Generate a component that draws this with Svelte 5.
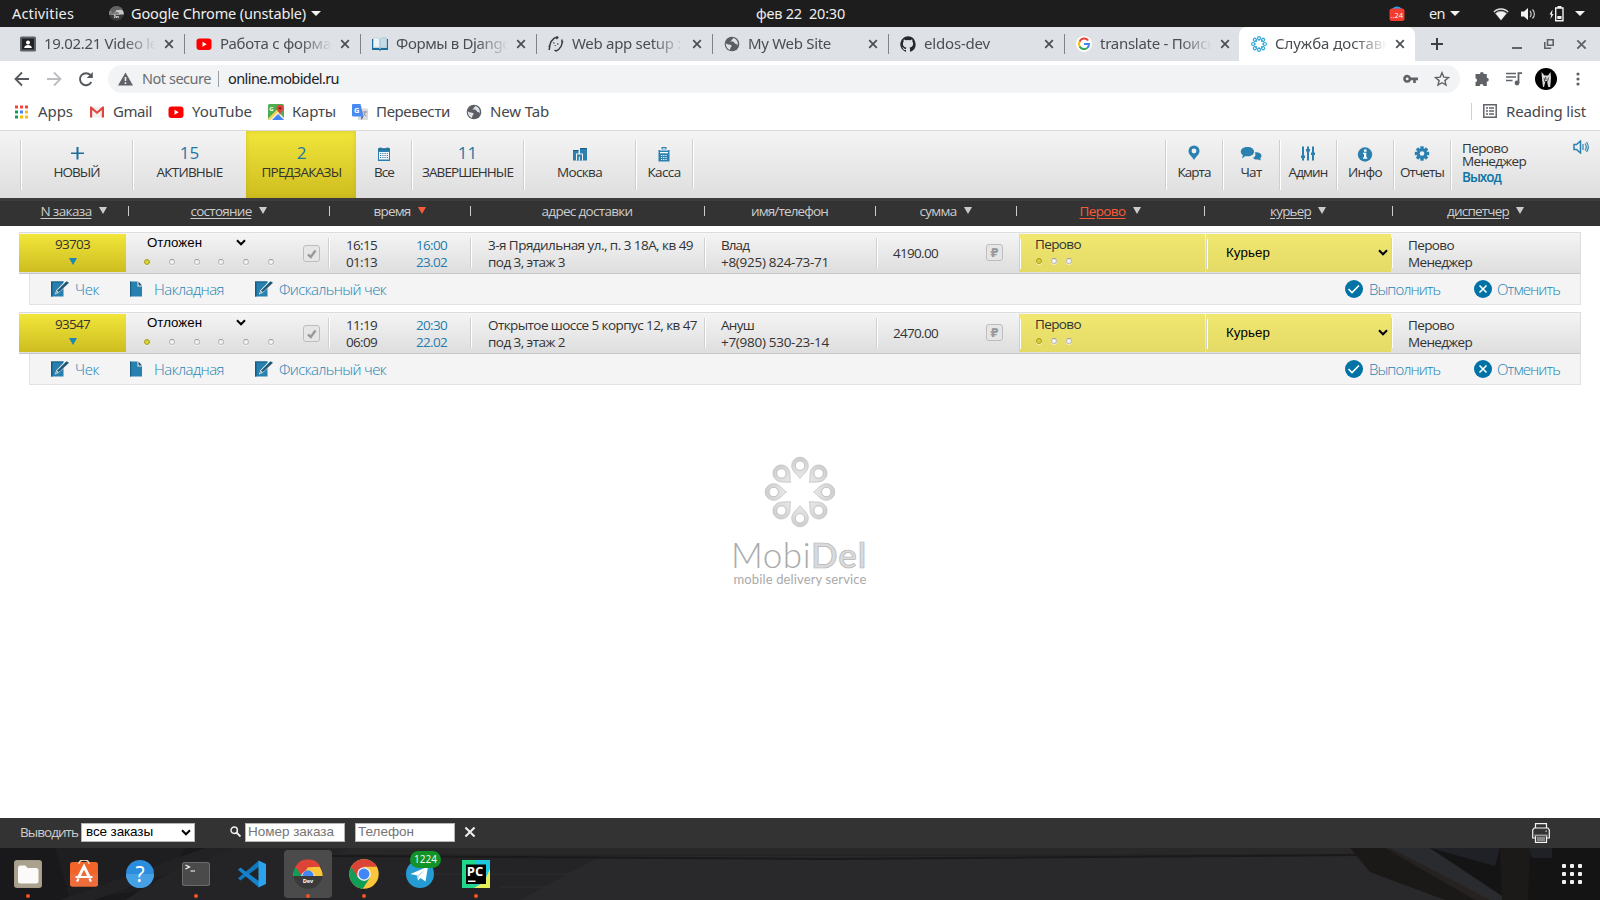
<script>
  // Spreads the letters of a label so that it fills exactly `width` pixels.
  function fit(node, width) {
    if (!width) return;
    const natural = node.getBoundingClientRect().width;
    node.style.letterSpacing = (width - natural) / node.textContent.length + 'px';
  }

  const tabs = [
    { icon: 'person', title: '19.02.21 Video le', w: 114 },
    { icon: 'youtube', title: 'Работа с форма', w: 111 },
    { icon: 'book', title: 'Формы в Django', w: 115 },
    { icon: 'horse', title: 'Web app setup :', w: 109 },
    { icon: 'globe', title: 'My Web Site', w: 83 },
    { icon: 'github', title: 'eldos-dev', w: 66 },
    { icon: 'google', title: 'translate - Поиск', w: 115 },
    { icon: 'flower', title: 'Служба доставк', w: 115, active: true }
  ];

  const bookmarks = [
    { icon: 'apps', title: 'Apps', w: 35, gap: 0 },
    { icon: 'gmail', title: 'Gmail', w: 39, gap: 16 },
    { icon: 'youtube', title: 'YouTube', w: 60, gap: 16 },
    { icon: 'maps', title: 'Карты', w: 44, gap: 16 },
    { icon: 'translate', title: 'Перевести', w: 74, gap: 16 },
    { icon: 'globe', title: 'New Tab', w: 59, gap: 16 }
  ];

  const menu = [
    { icon: 'plus', title: 'НОВЫЙ', size: 112, w: 46 },
    { count: 15, title: 'АКТИВНЫЕ', size: 114, w: 66 },
    { count: 2, title: 'ПРЕДЗАКАЗЫ', size: 110, w: 80, active: true },
    { icon: 'calendar', title: 'Все', size: 55, w: 20, bare: true },
    { count: 11, title: 'ЗАВЕРШЕННЫЕ', size: 112, w: 91 },
    { icon: 'city', title: 'Москва', size: 112, w: 45 },
    { icon: 'cash', title: 'Касса', size: 57, w: 33 }
  ];

  const tools = [
    { icon: 'pin', title: 'Карта', w: 33 },
    { icon: 'chat', title: 'Чат', w: 21 },
    { icon: 'sliders', title: 'Админ', w: 39 },
    { icon: 'info', title: 'Инфо', w: 34 },
    { icon: 'gear', title: 'Отчеты', w: 44 }
  ];

  const columns = [
    { title: 'N заказа', w: 51, link: true, arrow: true },
    { title: 'состояние', w: 61, link: true, arrow: true },
    { title: 'время', w: 37, arrow: true, sorted: true },
    { title: 'адрес доставки', w: 91 },
    { title: 'имя/телефон', w: 77 },
    { title: 'сумма', w: 37, arrow: true },
    { title: 'Перово', w: 46, link: true, arrow: true, hot: true },
    { title: 'курьер', w: 41, link: true, arrow: true },
    { title: 'диспетчер', w: 62, link: true, arrow: true }
  ];

  const orders = [
    { id: '93703', at: '16:15', left: '01:13', due: '16:00', day: '23.02', addr: '3-я Прядильная ул., п. 3 18А, кв 49', aw: 205, addr2: 'под 3, этаж 3', name: 'Влад', nw: 28, phone: '+8(925) 824-73-71', sum: '4190.00' },
    { id: '93547', at: '11:19', left: '06:09', due: '20:30', day: '22.02', addr: 'Открытое шоссе 5 корпус 12, кв 47', aw: 209, addr2: 'под 3, этаж 2', name: 'Ануш', nw: 33, phone: '+7(980) 530-23-14', sum: '2470.00' }
  ];

  const petals = [0, 45, 90, 135, 180, 225, 270, 315];
  const teeth = [0, 45, 90, 135];
  const three = [0, 1, 2];

  const dock = [
    { icon: 'files', run: true },
    { icon: 'software' },
    { icon: 'help' },
    { icon: 'terminal', run: true },
    { icon: 'vscode' },
    { icon: 'chromedev', run: true, focus: true },
    { icon: 'chrome', run: true },
    { icon: 'telegram', badge: '1224' },
    { icon: 'pycharm', run: true }
  ];
</script>

{#snippet cross(size)}
  <svg width={size} height={size} viewBox="0 0 10 10"><path d="M1.2 1.2l7.6 7.6M8.8 1.2L1.2 8.8" stroke="currentColor" stroke-width="1.7" fill="none" /></svg>
{/snippet}

{#snippet chevron()}
  <svg width="10" height="7" viewBox="0 0 10 7"><path d="M1 1.3l4 4 4-4" stroke="#000" stroke-width="2" fill="none" /></svg>
{/snippet}

{#snippet chromeIcon(size, dev)}
  <svg width={size} height={size} viewBox="0 0 48 48">
    <circle cx="24" cy="24" r="23.5" fill={dev ? '#3a3a3a' : '#fbc63c'} />
    {#if dev}
      <path d="M.5 27A23.5 23.5 0 0 1 47.5 27z" fill="#fbc63c" />
      <path d="M3.6 12.2A23.5 23.5 0 0 0 .7 27H16z" fill="#0f9d58" />
      <path d="M3.6 12.2A23.5 23.5 0 0 1 44.4 12.2L24 13L14 27z" fill="#db4437" />
      <path d="M13 27a11.500 11.500 0 0 1 22 0z" fill="#f1f1f1" /><path d="M15 27a9 9 0 0 1 18 0z" fill="#4285f4" />
      <text x="24" y="39" text-anchor="middle" class="dev">Dev</text>
    {:else}
      <path d="M24 24L3.6 12.2A23.5 23.5 0 0 0 22 47.5L34 29z" fill="#109d58" />
      <path d="M3.6 12.2A23.5 23.5 0 0 1 44.5 12.5H24L14 30z" fill="#db4437" />
      <circle cx="24" cy="24" r="11" fill="#f1f1f1" /><circle cx="24" cy="24" r="8.7" fill="#4285f4" />
    {/if}
  </svg>
{/snippet}

{#snippet favicon(name)}
  <svg width="16" height="16" viewBox="0 0 16 16">
    {#if name === 'person'}
      <rect width="16" height="15" y=".5" rx="1.5" fill="#5f6368" /><rect x="2" y="2.5" width="12" height="11" fill="#202124" />
      <circle cx="8" cy="6.5" r="2" fill="#fff" /><path d="M4.2 12c0-4 7.6-4 7.6 0z" fill="#fff" />
    {:else if name === 'youtube'}
      <rect x=".5" y="2.5" width="15" height="11.5" rx="3" fill="#f00" /><path d="M6.5 5.8v5l4.2-2.5z" fill="#fff" />
    {:else if name === 'book'}
      <path d="M0 3h1v9h6l1 1 1-1h6V3h1v11H9l-1 1-1-1H0z" fill="#1b6f9d" /><path d="M1.5 2c3-.7 5 0 6.2 1v9C6 11 4 11 1.5 11.5z" fill="#eef3f6" stroke="#8fb6c8" stroke-width=".5" /><path d="M14.5 2c-3-.7-5 0-6.2 1v9c1.700-1 3.700-1 6.200-.5z" fill="#c4dce7" stroke="#8fb6c8" stroke-width=".5" />
    {:else if name === 'horse'}
      <path d="M9.500.8C5 2 1.500 6 1.200 14M10.200.8L8.500 3M13.800 3.500c1.200 4.500-.8 9.500-6.300 11.700M14 5.500l1.200.8M1.500 10.500L.6 9.800M8 15l-1.500-1" stroke="#3a3c40" stroke-width="1.500" fill="none" /><path d="M5.800 6.300v1.400M9.800 7.300v1.400" stroke="#3a3c40" stroke-width="1.200" /><circle cx="7.200" cy="9.500" r=".6" />
    {:else if name === 'globe'}
      <circle cx="8" cy="8" r="7.300" fill="#5a5d61" /><path d="M9.500 1.800c-.2 1.500-1.500 1.200-2 2.200.3 1-1 1.300-1.500 1.500h3.200c.4.9 1.300 1 1.800 1.800.4 1.200 2.800.6 2.900 2.600 0-3.500 0-5.500-4.400-8.100zM1.800 7.200c1 .6 1.700 1.300 3.300 1.300 1.500 0 2.500.7 2.500 1.800 0 .8-1.200.7-1.200 1.700 0 .8-.3 1.500-.8 1.900C3 12.800 1.700 10 1.800 7.200z" fill="#dee1e6" />
    {:else if name === 'github'}
      <path d="M8 .3a8 8 0 0 0-2.500 15.500c.4 0 .5-.2.500-.4v-1.500c-2.200.5-2.700-1-2.700-1-.3-.9-.9-1.200-.9-1.200-.7-.5.1-.5.1-.5.8.1 1.200.8 1.200.8.700 1.300 1.900.9 2.300.7.1-.5.300-.9.500-1.100-1.800-.2-3.600-.9-3.600-4 0-.8.300-1.600.8-2.100-.1-.2-.4-1 .1-2.100 0 0 .7-.2 2.200.8a7.500 7.500 0 0 1 4 0c1.500-1 2.200-.8 2.200-.8.4 1.100.2 1.900.1 2.100.5.600.8 1.300.8 2.100 0 3.100-1.900 3.800-3.700 4 .3.200.6.700.6 1.500v2.200c0 .2.100.5.600.4A8 8 0 0 0 8 .3z" fill="#24292e" />
    {:else if name === 'google'}
      <circle cx="8" cy="8" r="8" fill="#fff" />
      <path d="M12.200 4.500A5 5 0 0 0 3.600 5.600" stroke="#ea4335" stroke-width="2" fill="none" /><path d="M3.600 5.600a5 5 0 0 0 0 4.900" stroke="#fbbc05" stroke-width="2" fill="none" />
      <path d="M3.600 10.500a5 5 0 0 0 7.600 1.400" stroke="#34a853" stroke-width="2" fill="none" /><path d="M8 8h5a5 5 0 0 1-1.800 3.900" stroke="#4285f4" stroke-width="2" fill="none" />
    {:else if name === 'flower'}
      {#each petals as a}<g transform="rotate({a} 8 8)"><circle cx="8" cy="2.100" r="1.500" fill="none" stroke="#35a8d8" stroke-width="1.200" /><path d="M6.300 3l1.700 2.200L9.700 3z" fill="#35a8d8" /></g>{/each}
    {:else if name === 'apps'}
      {#each three as r}{#each three as c}<rect x={1 + c * 5} y={1.500 + r * 5} width="3" height="3" fill={[['#f44336', '#f44336', '#f44336'], ['#0f9d58', '#4285f4', '#fbbc05'], ['#0f9d58', '#fbbc05', '#fbbc05']][r][c]} />{/each}{/each}
    {:else if name === 'gmail'}
      <path d="M1 3h14v10.500H1z" fill="#f1efef" /><path d="M1 2.500h1.500L8 7.500l5.500-5H15v11h-2.200V6L8 10 3.200 6v7.500H1z" fill="#e0443e" />
    {:else if name === 'maps'}
      <rect width="16" height="16" rx="1.500" fill="#4caf50" /><path d="M0 15L9 6l7 8v1l-1 1H1z" fill="#f7f2e4" /><path d="M4 16l6-6 6 6z" fill="#4285f4" /><path d="M0 15L13 2l2 1L2 16z" fill="#fbd04b" /><path d="M8.500 4.300a3.500 3.500 0 0 1 7 0c0 2.500-3 3.500-3.500 7.200-.5-3.700-3.500-4.700-3.500-7.200z" fill="#e0443e" /><circle cx="12" cy="4.300" r="1.300" fill="#8f1d18" /><text x="1.200" y="6.800" class="tiny">G</text>
    {:else if name === 'translate'}
      <rect x="6" y="4.500" width="10" height="11.500" rx="1" fill="#dcdcdc" /><path d="M1 0h7.500l3 12.500H1a1 1 0 0 1-1-1V1a1 1 0 0 1 1-1z" fill="#4889f4" /><path d="M9 12.500h2.500L9.500 16z" fill="#3563c0" /><path d="M10.500 8h5M13 7v1c0 2-1 3.500-2 4.500m.5-3.500l3 3.500" stroke="#8a9096" stroke-width=".9" fill="none" /><text x="2" y="9" class="tiny g">G</text>
    {/if}
  </svg>
{/snippet}

{#snippet glyph(name)}
  <svg class="glyph" width="22" height="18" viewBox="0 0 22 18" fill="#2b80b0">
    {#if name === 'plus'}
      <path d="M10.500 3h2v5.500H18v1.500h-5.500v5.500h-2V10H5V8.500h5.500z" fill="#1d6c99" />
    {:else if name === 'calendar'}
      <path d="M5 4.500h1.500V3.500h2v1h5v-1h2v1H17V17H5z" /><path d="M6 8h10v7.500H6z" fill="#f4f8fa" /><path d="M7.200 9.500h8M7.200 11.500h8M7.200 13.500h8" stroke="#1f6a95" stroke-width="1" stroke-dasharray="1 1.200" /><path d="M5 4.500h12v1H5z" fill="#185c82" />
    {:else if name === 'city'}
      <path d="M4 6h5.500v10.500H4zM11 4h7v12.500h-7z" /><path d="M4 6h5.500v1H4zM11 4h7v1h-7z" fill="#185c82" /><path d="M7 9.500h7v7H7z" fill="#eee" /><path d="M8 10.500h5v6H8z" /><path d="M9.800 12.500h1.200v4H9.800z" fill="#ddd" />
    {:else if name === 'cash'}
      <path d="M8.500 3h5v3h-5z" /><path d="M9.700 4.200h2.700v1H9.700z" fill="#eee" /><path d="M5.500 6h11v11.500h-11z" /><path d="M7 5.500h8V6.500H7zM7 8h8v1.200H7z" fill="#fff" /><path d="M8 11.500h6M8 13.500h6M8 15.500h6" stroke="#fff" stroke-width="1.100" stroke-dasharray="1.200 1" />
    {:else if name === 'pin'}
      <path d="M5.500 7a5.500 5.500 0 0 1 11 0c0 3.500-3.500 5.500-5.500 9-2-3.500-5.500-5.500-5.500-9z" /><circle cx="11" cy="7" r="2.400" fill="#f0f0f0" />
    {:else if name === 'chat'}
      <path d="M14.800 8.500c3-.8 6.700.5 6.700 3.200 0 1.300-.6 2-1.300 2.500l.8 2.300-3-1.100c-2.500.4-4.300-.4-5-1.400 2-.9 3.300-3 1.800-5.500z" /><path d="M7.500 3C11.500 3 14 5 14 7.700s-2.500 4.600-6.500 4.600c-.8 0-1.500 0-2-.2L2 14.500l.9-3.200C1.700 10.200.8 9.200.8 7.700.8 5 3.500 3 7.500 3z" />
    {:else if name === 'sliders'}
      <path d="M5 2.500h2v14H5zM10 2.500h2v14h-2zM15 2.500h2v14h-2z" /><path d="M4 11.500h4V14H4zM9 5h4v2.500H9zM14 8.500h4V11h-4z" />
    {:else if name === 'info'}
      <circle cx="11" cy="10.500" r="7.200" /><path d="M10 5.500h2.500v2.200H10zM9 8.800h3.300v4.700h1v1.300H9v-1.300h1v-3.400H9z" fill="#fff" />
    {:else if name === 'gear'}
      {#each teeth as a}<rect x="9.300" y="2.300" width="3.400" height="14.400" transform="rotate({a} 11 9.500)" />{/each}<circle cx="11" cy="9.500" r="5.200" /><circle cx="11" cy="9.500" r="2.300" fill="#eee" />
    {/if}
  </svg>
{/snippet}

{#snippet edit()}
  <svg width="18" height="16" viewBox="0 0 18 16"><path d="M0 .5h12.500V15.500H0z" fill="#2680b0" /><path d="M0 .5h1.500v15H0zM0 .5h12.500v1H0z" fill="#185c82" /><path d="M4 13.500l1.200-4L14 .3l4 2L7.500 12z" fill="#f3f3f3" /><path d="M5 12.500l1-2.700L15.500.2 18 1.800 7.700 11.300z" fill="#1d5775" /><path d="M5.500 12l1-2 1.200 1z" fill="#fff" /></svg>
{/snippet}

{#snippet dots(n, on)}
  {#each Array(n) as _, i}<i class="dot" class:on={i < on}></i>{/each}
{/snippet}

{#snippet dockIcon(name)}
  {#if name === 'chrome'}{@render chromeIcon(30, false)}
  {:else if name === 'chromedev'}{@render chromeIcon(30, true)}
  {:else}
    <svg width="28" height="28" viewBox="0 0 28 28">
      {#if name === 'files'}
        <rect width="28" height="28" rx="3" fill="#a39b87" /><rect x="1" y="1" width="26" height="26" rx="2.500" fill="#aaa28e" /><path d="M4 8a2.500 2.500 0 0 1 2.500-2.500h5l2 2.500H22a2.500 2.500 0 0 1 2.500 2.500V21a2.500 2.500 0 0 1-2.500 2.500H6.500A2.500 2.500 0 0 1 4 21z" fill="#fbfaf8" />
      {:else if name === 'software'}
        <rect y="2" width="28" height="24.500" rx="2.500" fill="#f16529" /><path d="M0 14h28v10a2.500 2.500 0 0 1-2.500 2.500h-23A2.500 2.500 0 0 1 0 24z" fill="#ee6d3d" /><path d="M9 4c0-5.500 10-5.500 10 0" stroke="#f5d9b7" stroke-width="1.500" fill="none" /><path d="M8.500 17.500L14 6.500l5.500 11" stroke="#fff" stroke-width="2.800" fill="none" /><path d="M5.500 17h17M7 21.500l1.500-3M21 21.500l-1.500-3" stroke="#fff" stroke-width="2.200" fill="none" />
      {:else if name === 'help'}
        <circle cx="14" cy="14" r="14" fill="#2b8ddc" /><path d="M0 14h28a14 14 0 0 1-28 0z" fill="#45a0e4" /><text x="14" y="21.500" text-anchor="middle" class="q">?</text>
      {:else if name === 'terminal'}
        <rect y="2" width="28" height="24" rx="2.500" fill="#6a6a6a" /><rect x="1" y="3" width="26" height="22" rx="2" fill="#4a4a4a" /><path d="M3.500 5l4 2-4 2M8.500 11H13" stroke="#fff" stroke-width="1.200" fill="none" />
      {:else if name === 'vscode'}
        <path d="M0 18.300L2.300 20.500 21 6.800V.5L5 14z" fill="#1179bb" /><path d="M0 9.700L2.300 7.500 21 21.200v6.300z" fill="#1583cb" /><path d="M20.500.5L28 4v20l-7.500 3.500z" fill="#2ba3ea" />
      {:else if name === 'telegram'}
        <circle cx="14" cy="14" r="14" fill="#249bd2" /><path d="M4.500 14L22 6.500 19.500 21.500l-5-3.500-2.500 2.500-.8-5z" fill="#fff" /><path d="M11.200 15.500L19 9.500l-6.200 7-.8 4z" fill="#bcd6e5" />
      {:else if name === 'pycharm'}
        <path d="M0 0h28v28H0z" fill="#21d789" /><path d="M13 0h15v12L20 28H13z" fill="#1cc8e0" /><path d="M28 9v19H12l10-6z" fill="#e6ee55" /><path d="M4 4.500h20v19.500H4z" fill="#000" /><path d="M6 20.500h7.500V22H6z" fill="#fff" /><text x="4.800" y="16" class="pc">PC</text>
      {/if}
    </svg>
  {/if}
{/snippet}

<div class="screen">
  <div class="gnome">
    <span class="act" use:fit={62}>Activities</span>
    <span class="grey">{@render chromeIcon(15, true)}</span>
    <span use:fit={175}>Google Chrome (unstable)</span><i class="down"></i>
    <span class="date" use:fit={89}>фев 22&nbsp; 20:30</span>
    <svg class="mail" width="16" height="16" viewBox="0 0 16 16"><circle cx="8" cy="7" r="6.500" fill="#2f9fe8" /><rect x=".5" y="2.500" width="15" height="12.500" rx="2.500" fill="#f33b30" /><text x="1.500" y="12" class="n24">..24</text></svg>
    <span use:fit={16}>en</span><i class="down"></i>
    <svg class="wifi" width="16" height="14" viewBox="0 0 16 14"><path d="M.5 4.500C4.500.3 11.500.3 15.500 4.500L8 13.500z" fill="#9b9b9b" /><path d="M.5 4.500C4.500.3 11.500.3 15.500 4.500L14 6.300C10.500 3 5.500 3 2 6.300z" fill="#1d1d1d" /><path d="M.5 4.500C4.500.3 11.500.3 15.500 4.500l-.8.9C11 1.800 5 1.800 1.300 5.400z" fill="#ddd" /><path d="M2.800 6.500c3.200-2.300 7.200-2.300 10.400 0L8 13z" fill="#f2f2f2" /></svg>
    <svg class="vol" width="16" height="14" viewBox="0 0 16 14"><path d="M0 4.500h3L7 1v12L3 9.500H0z" fill="#f2f2f2" /><path d="M9 4c1.500 1.500 1.500 4.500 0 6M11.500 2.500c2.500 2.500 2.500 6.500 0 9" stroke="#ccc" stroke-width="1.200" fill="none" /></svg>
    <svg class="bat" width="16" height="16" viewBox="0 0 16 16"><path d="M3.500 3.500L.5 8.500h1.700L1.500 13l3-5H3z" fill="#f2f2f2" /><path d="M7.500 2h6.500v12.700H6.700V2zM8.500.8h4" stroke="#f2f2f2" stroke-width="1.400" fill="none" /><path d="M8.300 10h4.200v3H8.300z" fill="#f2f2f2" /></svg>
    <i class="down last"></i>
  </div>

  <div class="tabs">
    {#each tabs as tab, i}
      <div class="tab" class:active={tab.active} class:nosep={i === 6}>
        {@render favicon(tab.icon)}
        <div class="clip"><span use:fit={tab.w}>{tab.title}</span></div>
        {@render cross(10)}
      </div>
    {/each}
    <svg class="newtab" width="12" height="12" viewBox="0 0 12 12"><path d="M6 0v12M0 6h12" stroke="#3c4043" stroke-width="2" /></svg>
    <div class="wm">
      <svg width="10" height="10" viewBox="0 0 10 10"><path d="M0 9h10" stroke="#5f6368" stroke-width="2" /></svg>
      <svg width="10" height="10" viewBox="0 0 10 10"><path d="M3.500.8h5.700v5.500H3.500zM.8 3v6.200h6.400" stroke="#5f6368" stroke-width="1.600" fill="none" /></svg>
      {@render cross(11)}
    </div>
  </div>

  <div class="nav">
    <svg width="16" height="16" viewBox="0 0 16 16"><path d="M15 8H2M8 1.500L1.500 8 8 14.500" stroke="#55585c" stroke-width="1.800" fill="none" /></svg>
    <svg width="16" height="16" viewBox="0 0 16 16"><path d="M1 8h13M8 1.500L14.500 8 8 14.500" stroke="#bbbdc0" stroke-width="1.800" fill="none" /></svg>
    <svg width="16" height="16" viewBox="0 0 16 16"><path d="M13.300 11A6 6 0 1 1 12.500 4.200" stroke="#55585c" stroke-width="1.900" fill="none" /><path d="M14.800 1v6H8.700z" fill="#55585c" /></svg>
    <div class="omni">
      <svg width="15" height="14" viewBox="0 0 15 14"><path d="M7.500.5L15 13.500H0z" fill="#5f6368" /><path d="M6.700 5h1.600v4H6.700zM6.700 10.300h1.600v1.600H6.700z" fill="#f1f3f4" /></svg>
      <span class="ns" use:fit={69}>Not secure</span><i class="bar"></i><span class="url" use:fit={111}>online.mobidel.ru</span>
      <svg class="key" width="15" height="10" viewBox="0 0 15 10"><path d="M4.200.8a4 4 0 1 0 3.800 5.400h2.200V9h2.600V6.200H15V3.500H8A4 4 0 0 0 4.200.8zm0 2.700a1.400 1.400 0 1 1 0 2.800 1.400 1.400 0 0 1 0-2.800z" fill="#5f6368" /></svg>
      <svg width="16" height="16" viewBox="0 0 16 16"><path d="M8 1.800l1.800 4.300 4.700.4-3.600 3.100 1.100 4.500L8 11.700l-4 2.400 1.100-4.500L1.500 6.500l4.700-.4z" stroke="#5f6368" stroke-width="1.400" fill="none" /></svg>
    </div>
    <svg class="ext" width="16" height="16" viewBox="0 0 16 16"><path d="M6 3a1.900 1.900 0 0 1 3.800 0h3v3.800a2 2 0 0 1 0 4V15H9.500a1.900 1.900 0 0 0-3.800 0H1.500v-3.800a2 2 0 0 0 0-3.900V3z" fill="#5f6368" /></svg>
    <svg width="17" height="14" viewBox="0 0 17 14"><path d="M0 1.500h10M0 5h10M0 8.500h6.500" stroke="#5f6368" stroke-width="1.600" /><path d="M12.500 11V1.200H16" stroke="#5f6368" stroke-width="1.800" fill="none" /><circle cx="11" cy="11" r="2.400" fill="#5f6368" /></svg>
    <svg class="face" width="22" height="22" viewBox="0 0 22 22"><circle cx="11" cy="11" r="11" fill="#000" /><path d="M6.500 4l3 3.500h3.500L15.500 4l.5 6-.8 9h-2l-1.200-6h-1.500L9 19H8L7 11z" fill="#d9d9d9" /><path d="M10.500 9l.5 3M9 10l1 4M13.500 9.500l-1 4" stroke="#222" stroke-width=".8" /></svg>
    <svg class="kebab" width="4" height="14" viewBox="0 0 4 14" fill="#5f6368"><circle cx="2" cy="2" r="1.600" /><circle cx="2" cy="7" r="1.600" /><circle cx="2" cy="12" r="1.600" /></svg>
  </div>

  <div class="marks">
    {#each bookmarks as b}
      <div class="mark" style="margin-left: {b.gap}px">{@render favicon(b.icon)}<span use:fit={b.w}>{b.title}</span></div>
    {/each}
    <div class="reading"><svg width="14" height="14" viewBox="0 0 14 14"><path d="M.8.8h12.400v12.400H.8z" stroke="#5f6368" stroke-width="1.500" fill="none" /><path d="M3 4h2M3 7h2M3 10h2M6 4h5M6 7h5M6 10h5" stroke="#5f6368" stroke-width="1.400" /></svg><span use:fit={80}>Reading list</span></div>
  </div>

  <div class="menu">
    {#each menu as m}
      <div class="item" class:active={m.active} class:bare={m.bare} style="width: {m.size}px">
        {#if m.count}<b>{m.count}</b>{:else}{@render glyph(m.icon)}{/if}
        <span use:fit={m.w}>{m.title}</span>
      </div>
    {/each}
    <i class="rule"></i>
    <div class="tools">
      {#each tools as t}
        <div class="item">{@render glyph(t.icon)}<span use:fit={t.w}>{t.title}</span></div>
      {/each}
      <div class="item user">
        <span use:fit={46}>Перово</span><span use:fit={64}>Менеджер</span><a href="#exit" use:fit={39}>Выход</a>
      </div>
      <svg class="sound" width="16" height="14" viewBox="0 0 16 14"><path d="M1 4.500h2.500L7.500 1v12L3.500 9.500H1z" stroke="#2b80b0" stroke-width="1.500" fill="none" /><path d="M10 4v6M12 3.500c1.500 2 1.500 5 0 7M13.500 2c2.200 3 2.200 7 0 10" stroke="#2f83b0" stroke-width="1.200" fill="none" /></svg>
    </div>
  </div>

  <div class="cols head">
    {#each columns as c}
      <div class:hot={c.hot}><span class:link={c.link} use:fit={c.w}>{c.title}</span>{#if c.arrow}<i class="tri" class:sorted={c.sorted}></i>{/if}</div>
    {/each}
  </div>

  <div class="orders">
    {#each orders as o}
      <div class="cols row">
        <div class="num"><span use:fit={35}>{o.id}</span><i class="tri"></i></div>
        <div class="state">
          <div class="stack"><div class="pick"><span use:fit={55}>Отложен</span>{@render chevron()}</div><div class="line">{@render dots(6, 1)}</div></div>
          <div class="sq"><svg width="10" height="10" viewBox="0 0 10 10"><path d="M1 5.500L3.800 8 8.500 1.500" stroke="#999" stroke-width="2.400" fill="none" /></svg></div>
        </div>
        <div class="time"><p><span use:fit={31}>{o.at}</span><span use:fit={31}>{o.left}</span></p><p class="blue"><span use:fit={31}>{o.due}</span><span use:fit={31}>{o.day}</span></p></div>
        <div class="text addr"><p><span use:fit={o.aw}>{o.addr}</span><span use:fit={77}>{o.addr2}</span></p></div>
        <div class="text"><p><span use:fit={o.nw}>{o.name}</span><span use:fit={108}>{o.phone}</span></p></div>
        <div class="text sum"><span use:fit={45}>{o.sum}</span><div class="sq">₽</div></div>
        <div class="shop"><span use:fit={46}>Перово</span><div class="line">{@render dots(3, 1)}</div></div>
        <div class="courier"><span use:fit={44}>Курьер</span>{@render chevron()}</div>
        <div class="text"><p><span use:fit={46}>Перово</span><span use:fit={64}>Менеджер</span></p></div>
      </div>
      <div class="actions">
        {@render edit()}<span use:fit={24}>Чек</span>
        <svg class="doc" width="13" height="16" viewBox="0 0 13 16"><path d="M0 .5h7.500v5H12v10H0z" fill="#2680b0" /><path d="M0 .5h1.200v15H0z" fill="#185c82" /><path d="M8.500.5L12 4.500H8.500z" fill="#1d4f6c" /></svg><span use:fit={70}>Накладная</span>
        <span class="fisc">{@render edit()}</span><span use:fit={107}>Фискальный чек</span>
        <svg class="ok" width="18" height="18" viewBox="0 0 18 18"><circle cx="9" cy="9" r="9" fill="#0072a6" /><path d="M3.500 9l3.500 3.500 7-7" stroke="#fff" stroke-width="1.600" fill="none" /></svg><span use:fit={71}>Выполнить</span>
        <svg class="no" width="18" height="18" viewBox="0 0 18 18"><circle cx="9" cy="9" r="9" fill="#0072a6" /><path d="M5.500 5.500l7 7M12.500 5.500l-7 7" stroke="#fff" stroke-width="1.600" fill="none" /></svg><span use:fit={63}>Отменить</span>
      </div>
    {/each}
  </div>

  <div class="brand">
    <svg width="72" height="72" viewBox="0 0 72 72">
      <defs><linearGradient id="petal" x1="0" y1="0" x2="0" y2="1"><stop offset="0" stop-color="#cfcfcf" /><stop offset="1" stop-color="#e8e8e8" /></linearGradient></defs>
      {#each petals as a}
        <g transform="rotate({a} 36 36)"><path d="M36 22.500C34 19 27.700 15.500 27.700 9.500a8.300 8.300 0 0 1 16.600 0C44.300 15.500 38 19 36 22.500z" fill="url(#petal)" stroke="#c2c2c2" stroke-width=".8" /><circle cx="36" cy="9.700" r="4.700" fill="#fff" stroke="#b9b9b9" stroke-width=".8" /></g>
      {/each}
    </svg>
    <div class="word"><span use:fit={80}>Mobi</span><b use:fit={56}>Del</b></div>
    <div class="motto"><span use:fit={133}>mobile delivery service</span></div>
  </div>

  <div class="filter">
    <span class="lbl" use:fit={58}>Выводить</span>
    <div class="field sel"><span use:fit={67}>все заказы</span>{@render chevron()}</div>
    <svg class="lens" width="11" height="11" viewBox="0 0 11 11"><circle cx="4.200" cy="4.200" r="3.200" stroke="#eee" stroke-width="1.500" fill="none" /><path d="M6.500 6.500l4 4" stroke="#eee" stroke-width="1.900" /></svg>
    <div class="field"><span use:fit={86}>Номер заказа</span></div>
    <div class="field tel"><span use:fit={56}>Телефон</span></div>
    <span class="clear">{@render cross(12)}</span>
    <svg class="printer" width="18" height="20" viewBox="0 0 18 20"><path d="M3.500 5V.7h11V5M3.500 15H.7V7l1.500-2h13.600l1.500 2v8h-2.800M3.500 12.500h11v6.800h-11z" stroke="#f4f4f4" stroke-width="1.200" fill="none" /><path d="M2.500 11.500h13v1.800h-13z" fill="#999" /><path d="M5 15h8M5 17h8" stroke="#ddd" /><path d="M13.500 7.500h1.300v1.200h-1.300z" fill="#ddd" /></svg>
  </div>

  <div class="dock">
    <svg class="wood" width="1600" height="52" viewBox="0 0 1600 52" preserveAspectRatio="none">
      <rect width="1600" height="52" fill="#19191b" />
      <path d="M55 0h130l-20 40-95 12zM230 0h90L190 52h-60z" fill="#1e1e21" />
      <path d="M210 0h1150l95 52H125z" fill="#242427" /><path d="M205 0h30L95 52H60z" fill="#222225" /><path d="M600 8h770l85 44H520z" fill="#29292b" />
      <path d="M330 7l500 3 530-4v2l-530 4-500-3z" fill="#1b191a" />
      <path d="M350 0h1000l12 6H340z" fill="#292829" />
      <path d="M400 26h900M500 39h880M800 20h500" stroke="#2c2c2e" />
      <path d="M1350 0h40l110 52h-55l-75-28z" fill="#1b1918" /><path d="M1385 0h50l75 52h-35z" fill="#252221" /><path d="M1390 0h40l80 52h-20z" fill="#2a2b2e" />
      <path d="M1430 0h170v52h-92z" fill="#151415" /><path d="M1430 0h70l-5 18zM1528 0h24v10h-20z" fill="#202126" /><path d="M1500 0h30l-2 52h-26z" fill="#1b1a19" />
    </svg>
    {#each dock as d}
      <div class="app" class:focus={d.focus}>
        {@render dockIcon(d.icon)}
        {#if d.badge}<em>{d.badge}</em>{/if}
        {#if d.run}<i></i>{/if}
      </div>
    {/each}
    <svg class="grid" width="20" height="20" viewBox="0 0 20 20">{#each three as r}{#each three as c}<rect x={c * 8} y={r * 8} width="4" height="4" rx="1" fill="#f0f0f0" />{/each}{/each}</svg>
  </div>
</div>

<style>
  :global(body) { margin: 0; overflow: hidden; }
  .screen { width: 1600px; height: 900px; display: flex; flex-direction: column; background: #fff; font: 13.500px/17px "Open Sans", "Noto Sans", sans-serif; font-stretch: 92%; color: #333; overflow: hidden; }
  .screen * { box-sizing: border-box; }
  span, b, a { white-space: pre; display: inline-block; }
  svg { display: block; flex: none; }
  p { margin: 0; display: flex; flex-direction: column; align-items: flex-start; }

  .gnome { height: 27px; flex: none; background: #1d1d1d; color: #eee; display: flex; align-items: center; padding: 0 15px 0 12px; font: 14.5px/27px "Noto Sans", sans-serif; position: relative; }
  .act { margin-right: 35px; }
  .grey { filter: grayscale(1); margin-right: 7px; }
  .down { border: 5px solid transparent; border-top: 5px solid #f2f2f2; border-bottom: 0; margin-left: 5px; }
  .date { position: absolute; left: 756px; }
  .mail { margin-left: auto; margin-right: 24px; }
  .n24 { font: 7.5px "Open Sans", sans-serif; fill: #fff; }
  .wifi { margin-left: 33px; }
  .vol { margin-left: 12px; }
  .bat { margin-left: 12px; }
  .last { margin-left: 10px; }

  .tabs { height: 34px; flex: none; background: #dee1e6; display: flex; align-items: center; padding-left: 8px; color: #4a4d51; font: 15px/20px "Noto Sans", sans-serif; }
  .tab { width: 176px; height: 34px; display: flex; align-items: center; padding-left: 12px; position: relative; color: #4a4d51; }
  .tab:not(.active):not(.nosep)::after { content: ""; position: absolute; right: -1px; top: 7px; height: 20px; width: 1px; background: #80848a; }
  .tab .clip { width: 114px; height: 22px; margin: -1px 6px 0 8px; overflow: hidden; mask-image: linear-gradient(90deg, #000 80px, transparent 112px); }
  .tab.active { background: #fff; border-radius: 8px 8px 0 0; width: 176px; margin-left: -1px; padding-left: 12px; }
  .newtab { margin-left: 16px; }
  .wm { display: flex; margin-left: auto; gap: 22px; padding-right: 13px; color: #5f6368; }

  .nav { height: 36px; flex: none; display: flex; align-items: center; padding-left: 14px; gap: 16px; }
  .omni { width: 1352px; height: 28px; margin-left: -2px; border-radius: 14px; background: #f1f3f4; display: flex; align-items: center; padding: 0 10px; font: 14.500px/26px "Noto Sans", sans-serif; margin-right: -2px; }
  .omni span { margin-top: -2px; }
  .omni .ns { color: #6a6d71; margin: -2px 7px 0 9px; }
  .bar { width: 1px; height: 16px; background: #9aa0a6; margin-right: 9px; }
  .url { color: #202124; }
  .key { margin: 0 16px 0 auto; }
  .face { margin-left: -4px; }
  .kebab { margin-left: 3px; }

  .marks { height: 33px; flex: none; display: flex; align-items: center; padding: 0 14px 5px; font: 15px/20px "Noto Sans", sans-serif; color: #44474b; }
  .mark { display: flex; gap: 8px; }
  .mark svg { margin-top: 3px; }
  .reading { margin-left: auto; display: flex; align-items: center; gap: 9px; border-left: 1px solid #cdd0d4; padding-left: 11px; height: 17px; }

  .menu { height: 68px; flex: none; display: flex; padding-left: 20px; border-top: 1px solid #d9d9d9; background: linear-gradient(#f4f4f4, #dedede); }
  .item { position: relative; display: flex; flex-direction: column; align-items: center; padding: 13px 0 0 1px; height: 67px; }
  .item::before, .rule { content: ""; position: absolute; left: 0; top: 9px; width: 2px; height: 50px; background: linear-gradient(90deg, #cfcfcf 50%, #fff 50%); }
  .item.bare::before, .item.active::before { display: none; }
  .rule { position: static; margin-top: 8px; }
  .item b { font-weight: 400; font-size: 17px; line-height: 18px; color: #1f77a6; }
  .item span { margin-top: 2px; }
  .glyph { height: 18px; }
  .item.active { background: linear-gradient(#f1e63a, #cdbd20); box-shadow: inset 0 0 4px #a99b1466; }
  .tools { margin-left: auto; display: flex; position: relative; }
  .tools .item { width: 57px; }
  .tools .user { width: 150px; align-items: flex-start; padding: 11px 0 0 12px; line-height: 13px; }
  .user span { margin: 0; }
  .user a { color: #0b74a8; font-weight: 600; text-decoration: none; margin-top: 3px; }
  .sound { position: absolute; right: 11px; top: 9px; }

  .cols { display: grid; grid-template-columns: 109px 201px 141px 234px 171px 141px 188px 188px 187px; }
  .head { height: 28px; flex: none; padding-left: 20px; background: #333; border-top: 3px solid #3c3c3c; color: #ccc; }
  .head > div { display: flex; justify-content: center; align-items: center; height: 20px; padding-right: 2px; position: relative; }
  .head > div:not(:last-child)::after { content: ""; position: absolute; right: 0; top: 5px; height: 10px; width: 1px; background: #ccc; }
  .link { text-decoration: underline; text-underline-offset: 2px; }
  .hot span { color: #fb5a38; }
  .tri { border: 4px solid transparent; border-top: 7px solid #ccc; border-bottom: 0; margin: -1px 0 0 7px; }
  .sorted { border-top-color: #fb5a38; }

  .orders { padding: 6px 19px 0 19px; height: 214px; flex: none; }
  .row { height: 42px; width: 1562px; border-top: 1px solid #ddd; border-right: 1px solid #ddd; border-bottom: 1px solid #c8c8c8; background: linear-gradient(#f4f4f4, #dedede); grid-template-columns: 107px 202px 142px 234px 172px 142px 187px 186px 189px; }
  .row > div { position: relative; height: 40px; }
  .row > div:nth-child(n + 3)::before { content: ""; position: absolute; left: 0; top: 5px; height: 30px; width: 2px; background: linear-gradient(90deg, #d0d0d0 50%, #fff 50%); }
  .num { background: linear-gradient(#f1e63a, #cdbd20); margin-top: 1px; height: 38px !important; display: flex; flex-direction: column; align-items: center; padding-top: 2px; }
  .num .tri { border-top-color: #1d85b8; border-left-width: 4.500px; border-right-width: 4.500px; margin: 5px 0 0; }
  .state { display: flex; }
  .stack { width: 177px; }
  .pick { display: flex; align-items: center; gap: 34px; padding: 0 0 0 21px; font: 13.300px/16px "Liberation Sans", sans-serif; color: #000; height: 19px; }
  .line { display: flex; }
  .state .line { gap: 18.800px; padding: 7px 0 0 18px; }
  .dot { width: 6px; height: 6px; border-radius: 50%; background: #f4f4f4; border: 1px solid #bbb; border-top-color: #999; box-shadow: 0 1px #fff8; }
  .dot.on { background: #ddd037; border-color: #a89b1d; }
  .sq { width: 17px; height: 17px; border: 1px solid #bdbdbd; border-radius: 3px; background: #e6e6e6; display: flex; align-items: center; justify-content: center; font: bold 12px/14px "DejaVu Sans", sans-serif; color: #9a9a9a; }
  .state .sq { margin-top: 12px; }
  .time { display: flex; padding: 4px 0 0 18px; gap: 39px; }
  .blue { color: #1f7cad; }
  .text { padding: 4px 0 0 17px; }
  .addr { padding-left: 18px; }
  .sum { display: flex; padding-top: 12px; }
  .sum .sq { position: absolute; right: 15px; top: 11px; }
  .shop, .courier { background: linear-gradient(#f0e871, #e4da66); height: 38px !important; margin: 1px 0 0 1px; }
  .shop { padding: 2px 0 0 16px; }
  .shop .line { gap: 9px; padding: 5px 0 0 1px; }
  .row > .shop::before, .row > .courier::before { left: -1px; top: 4px; }
  .courier { display: flex; align-items: center; justify-content: space-between; padding: 0 3px 1px 20px; font: 13.300px/16px "Liberation Sans", sans-serif; color: #000; }
  .actions { height: 31px; margin: 0 0 7px 10px; width: 1552px; border: 1px solid #e2e2e2; border-top: 0; background: #f4f4f4; display: flex; align-items: center; padding: 0 20px 0 21px; color: #2583b3; font-size: 15px; font-weight: 300; }
  .actions > span { margin-left: 6px; padding-top: 1px; }
  .doc { margin: 0 5px 0 31px; }
  .actions > .fisc { margin-left: 31px; padding-top: 0; }
  .ok { margin-left: auto; }
  .no { margin-left: 34px; }
  .no + span { margin-left: 5px; }

  .brand { width: 140px; margin: 16px auto 0; display: flex; flex-direction: column; align-items: center; color: #b5b5b5; flex: 1; font-family: Lato, sans-serif; }
  .word { display: flex; height: 38px; margin-top: 7px; margin-left: -2px; font-size: 35px; line-height: 38px; font-weight: 300; color: #aaa; }
  .word b { font-weight: 600; color: #dadada; -webkit-text-stroke: .7px #b4b4b4; }
  .motto { font-size: 13px; line-height: 16px; margin-top: -2px; color: #a9a9a9; }

  .filter { height: 30px; flex: none; background: #333; color: #ccc; display: flex; align-items: center; padding: 0 50px 0 20px; }
  .lbl { margin-top: -2px; }
  .field { width: 100px; height: 19px; margin-top: -1px; background: #fff; border: 1px solid #b5b5b5; display: flex; align-items: center; padding: 0 0 1px 2px; font: 13.500px/16px "Liberation Sans", sans-serif; color: #757575; }
  .sel { width: 114px; margin-left: 3px; padding: 0 3px 1px 4px; justify-content: space-between; color: #000; }
  .lens { margin: -3px 4px 0 35px; }
  .tel { margin-left: 10px; }
  .clear { margin: -2px 0 0 9px; color: #eee; }
  .printer { margin: -1px 0 0 auto; }

  .dock { height: 52px; flex: none; position: relative; display: flex; gap: 8px; padding: 2px 18px 0 4px; background: #1b1b1d; }
  .wood { position: absolute; left: 0; top: 0; }
  .app { width: 48px; height: 48px; position: relative; display: flex; align-items: center; justify-content: center; border-radius: 4px; }
  .focus { background: #4b4b4c; }
  .app > i { position: absolute; left: 22px; bottom: 0; width: 4px; height: 4px; border-radius: 50%; background: #f05423; }
  .app em { position: absolute; left: 14px; top: 1px; width: 31px; height: 17px; border-radius: 9px; background: #119328; color: #e8f5e8; font: 10px/17px "Noto Sans", sans-serif; text-align: center; }
  .grid { margin: 14px 0 0 auto; position: relative; }
  .dev { font: bold 9px "Open Sans", sans-serif; fill: #fff; }
  .tiny { font: bold 6px "Open Sans", sans-serif; fill: #fff; }
  .g { font-size: 7.500px; }
  .q { font: 21px "Noto Sans", sans-serif; fill: #fff; }
  .pc { font: bold 13px "Open Sans", sans-serif; fill: #fff; }
</style>
